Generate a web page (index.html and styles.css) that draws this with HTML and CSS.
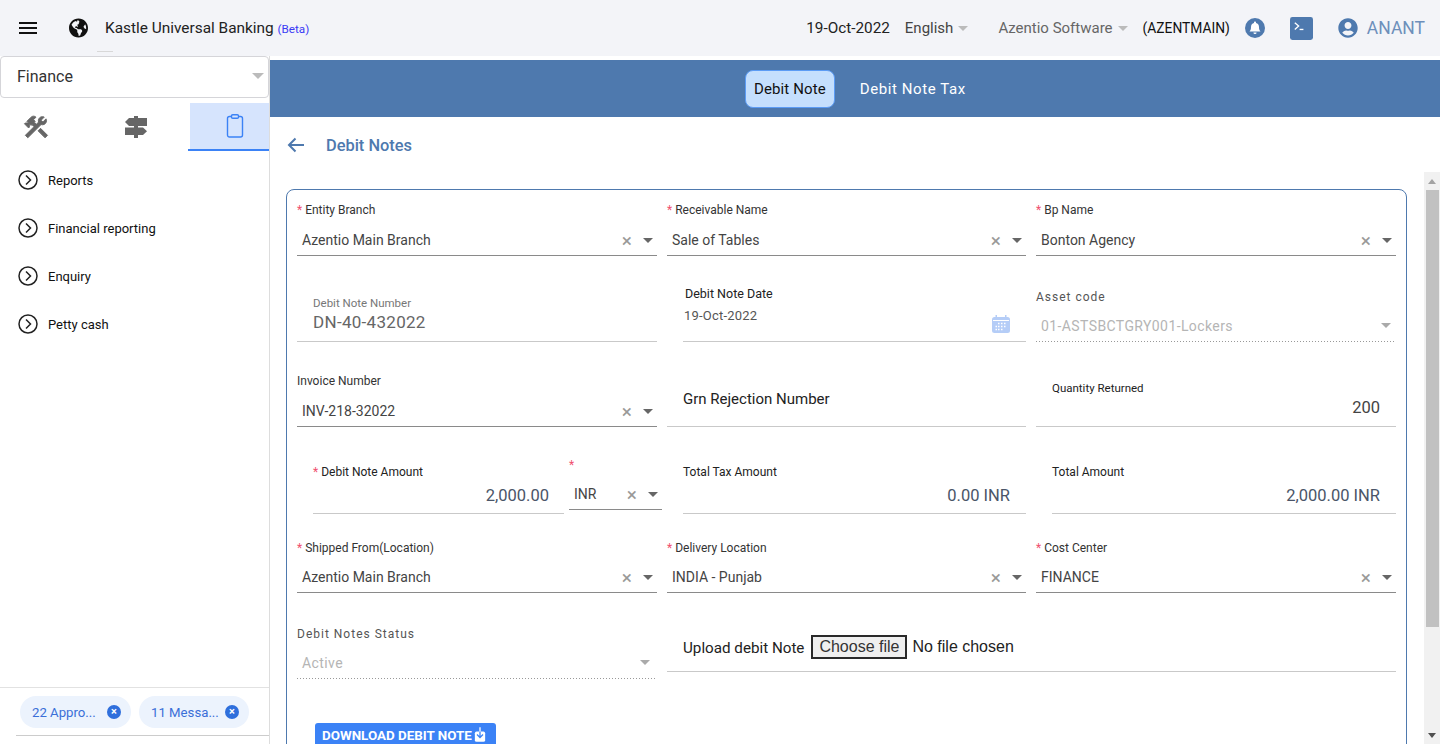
FILE: index.html
```html
<!DOCTYPE html>
<html>
<head>
  <meta charset="utf-8">
  <title>Debit Notes</title>
  <link rel="stylesheet" href="styles.css">
</head>
<body>

<header class="topbar">
  <div class="burger"><span></span><span></span><span></span></div>
  <svg class="globe" viewBox="0 0 496 512"><path d="M248 8C111.03 8 0 119.03 0 256s111.03 248 248 248 248-111.03 248-248S384.97 8 248 8zm82.29 357.6c-3.9 3.88-7.99 7.95-11.31 11.28-2.99 3-5.1 6.7-6.17 10.71-1.51 5.66-2.73 11.38-4.77 16.87l-17.39 46.85c-13.76 3-28 4.69-42.65 4.69v-27.38c1.69-12.62-7.64-36.26-22.63-51.25-6-6-9.37-14.14-9.37-22.63v-32.01c0-11.64-6.27-22.34-16.46-27.97-14.37-7.95-34.81-19.06-48.81-26.11-11.48-5.78-22.1-13.14-31.65-21.75l-.8-.72a114.792 114.792 0 0 1-18.06-20.74c-9.38-13.77-24.66-36.42-34.59-51.14 20.47-45.5 57.36-82.04 103.2-101.89l24.01 12.01C203.48 89.74 216 82.01 216 70.11v-11.3c7.99-1.29 16.12-2.11 24.39-2.42l28.3 28.3c6.25 6.25 6.25 16.38 0 22.63L264 112l-10.34 10.34c-3.12 3.12-3.12 8.19 0 11.31l4.69 4.69c3.12 3.12 3.12 8.19 0 11.31l-8 8a8.008 8.008 0 0 1-5.66 2.34h-8.99c-2.08 0-4.08.81-5.58 2.27l-9.92 9.65a8.008 8.008 0 0 0-1.58 9.31l15.59 31.19c2.66 5.32-1.21 11.58-7.15 11.58h-5.64c-1.93 0-3.79-.7-5.24-1.96l-9.28-8.06a16.017 16.017 0 0 0-15.55-3.1l-31.17 10.39a11.95 11.95 0 0 0-8.17 11.34c0 4.53 2.56 8.66 6.61 10.69l11.08 5.54c9.41 4.71 19.79 7.16 30.31 7.16s22.59 27.29 32 32h66.75c8.49 0 16.62 3.37 22.63 9.37l13.69 13.69a30.503 30.503 0 0 1 8.93 21.57 46.536 46.536 0 0 1-13.72 32.98zM417 274.25c-5.79-1.45-10.84-5-14.15-9.97l-17.98-26.97a23.97 23.97 0 0 1 0-26.62l19.59-29.38c2.32-3.47 5.5-6.29 9.24-8.15l12.98-6.49C440.2 193.59 448 223.87 448 256c0 8.67-.74 17.16-1.82 25.54L417 274.25z"/></svg>
  <div class="brand">Kastle Universal Banking <small>(Beta)</small></div>
  <div class="topright">
    <span class="date">19-Oct-2022</span>
    <span class="pick lang">English<i class="caret"></i></span>
    <span class="pick company">Azentio Software<i class="caret"></i></span>
    <span class="code">(AZENTMAIN)</span>
    <svg class="bell" viewBox="0 0 20 20"><circle cx="10" cy="10" r="10" fill="#4e79ae"/><path fill="#fff" d="M10 3.6c-.6 0-1 .4-1 1v.5C7.2 5.5 6 7 6 8.9c0 2.6-.6 3.5-1.5 4.6h11c-.9-1.1-1.5-2-1.5-4.6 0-1.9-1.2-3.4-3-3.8v-.5c0-.6-.4-1-1-1zM8.4 14.5a1.6 1.6 0 0 0 3.2 0z"/></svg>
    <svg class="term" viewBox="0 0 24 24"><rect width="24" height="24" rx="2.5" fill="#4e79ae"/><path d="M5 6l4 3.5L5 13" fill="none" stroke="#fff" stroke-width="1.4"/><path d="M10 13h4" stroke="#fff" stroke-width="1.4"/></svg>
    <svg class="usr" viewBox="0 0 496 512"><path d="M248 8C111 8 0 119 0 256s111 248 248 248 248-111 248-248S385 8 248 8zm0 96c48.6 0 88 39.4 88 88s-39.4 88-88 88-88-39.4-88-88 39.4-88 88-88zm0 344c-58.7 0-111.3-26.6-146.5-68.2 18.8-35.4 55.6-59.8 98.5-59.8 2.4 0 4.8.4 7.1 1.1 13 4.2 26.6 6.9 40.9 6.9 14.3 0 28-2.7 40.9-6.9 2.3-.7 4.7-1.1 7.1-1.1 42.9 0 79.7 24.4 98.5 59.8C359.3 421.4 306.7 448 248 448z"/></svg>
    <span class="uname">ANANT</span>
  </div>
  <span class="tick"></span>
</header>

<div class="page">
  <aside class="side">
    <div class="module">Finance<i class="caret"></i></div>
    <div class="sidetabs">
      <div class="stab">
        <svg class="tools" viewBox="0 0 24 24"><path d="M13.78 15.3L19.78 21.3L21.89 19.14L15.89 13.14L13.78 15.3M17.5 10.1C17.11 10.1 16.69 10.05 16.36 9.91L4.97 21.25L2.86 19.14L10.27 11.74L8.5 9.96L7.78 10.66L6.33 9.25V12.11L5.63 12.81L2.11 9.25L2.81 8.55H5.62L4.22 7.14L7.78 3.58C8.95 2.41 10.83 2.41 12 3.58L9.89 5.74L11.3 7.14L10.59 7.85L12.38 9.63L14.2 7.75C14.06 7.42 14 7 14 6.63C14 4.66 15.56 3.11 17.5 3.11C18.09 3.11 18.61 3.25 19.08 3.53L16.41 6.2L17.91 7.7L20.58 5.03C20.86 5.5 21 6 21 6.63C21 8.59 19.44 10.1 17.5 10.1Z"/></svg>
      </div>
      <div class="stab">
        <svg class="signs" viewBox="0 0 24 22"><path d="M5 2H23V10H5L1 6Z"/><path d="M1 11.5H19L23 15.25L19 19H1Z"/><path d="M10 0H14V22H10Z"/></svg>
      </div>
      <div class="stab active">
        <svg class="clip" viewBox="0 0 18 24"><rect x="1.5" y="2.5" width="15" height="20.5" rx="2" fill="none" stroke="#3b82f6" stroke-width="1.4"/><rect x="5.5" y="0.7" width="7" height="3.6" rx="1.2" fill="#d6e4fd" stroke="#3b82f6" stroke-width="1.4"/></svg>
      </div>
    </div>
    <ul class="menu">
      <li><svg class="chev" viewBox="0 0 20 20"><circle cx="10" cy="10" r="9" fill="none" stroke="#222" stroke-width="1.5"/><path d="M8 5.5l4.5 4.5L8 14.5" fill="none" stroke="#222" stroke-width="1.5"/></svg>Reports</li>
      <li><svg class="chev" viewBox="0 0 20 20"><circle cx="10" cy="10" r="9" fill="none" stroke="#222" stroke-width="1.5"/><path d="M8 5.5l4.5 4.5L8 14.5" fill="none" stroke="#222" stroke-width="1.5"/></svg>Financial reporting</li>
      <li><svg class="chev" viewBox="0 0 20 20"><circle cx="10" cy="10" r="9" fill="none" stroke="#222" stroke-width="1.5"/><path d="M8 5.5l4.5 4.5L8 14.5" fill="none" stroke="#222" stroke-width="1.5"/></svg>Enquiry</li>
      <li><svg class="chev" viewBox="0 0 20 20"><circle cx="10" cy="10" r="9" fill="none" stroke="#222" stroke-width="1.5"/><path d="M8 5.5l4.5 4.5L8 14.5" fill="none" stroke="#222" stroke-width="1.5"/></svg>Petty cash</li>
    </ul>
    <div class="chips">
      <span class="chip">22 Appro...<b>×</b></span>
      <span class="chip">11 Messa...<b>×</b></span>
    </div>
    <div class="sidefoot"></div>
  </aside>

  <main class="main">
    <nav class="tabs">
      <a class="tab on">Debit Note</a>
      <a class="tab">Debit Note Tax</a>
    </nav>
    <div class="titlerow">
      <svg class="back" viewBox="0 0 18 16"><path d="M17 8H2M8.5 1.5L2 8l6.5 6.5" fill="none" stroke="#4e79ae" stroke-width="2"/></svg>
      <h1>Debit Notes</h1>
    </div>
    <div class="body">
      <div class="scrollarea">
        <form class="card">

          <div class="field sel">
            <label><em>*</em> Entity Branch</label>
            <div class="val">Azentio Main Branch<s>×</s><i class="caret dark"></i></div>
          </div>
          <div class="field sel">
            <label><em>*</em> Receivable Name</label>
            <div class="val">Sale of Tables<s>×</s><i class="caret dark"></i></div>
          </div>
          <div class="field sel">
            <label><em>*</em> Bp Name</label>
            <div class="val">Bonton Agency<s>×</s><i class="caret dark"></i></div>
          </div>

          <div class="field text indent">
            <label class="gray">Debit Note Number</label>
            <div class="big">DN-40-432022</div>
          </div>
          <div class="field text datef">
            <label class="dark">Debit Note Date</label>
            <div class="dateval">19-Oct-2022
              <svg class="cal" viewBox="0 0 20 20"><rect x="1" y="3" width="18" height="16" rx="2.5" fill="#b5cdf7"/><rect x="4.5" y="1" width="1.5" height="4" fill="#b5cdf7"/><rect x="14" y="1" width="1.5" height="4" fill="#b5cdf7"/><path d="M2 6.5h16" stroke="#fff"/><path d="M7 9.5h1.5M10 9.5h1.5M13 9.5h1.5M4.5 12.5h1.5M7 12.5h1.5M10 12.5h1.5M13 12.5h1.5M4.5 15.5h1.5M7 15.5h1.5M10 15.5h1.5" stroke="#fff" stroke-width="1.5"/></svg>
            </div>
          </div>
          <div class="field off">
            <label class="spaced">Asset code</label>
            <div class="val">01-ASTSBCTGRY001-Lockers<i class="caret dark"></i></div>
          </div>

          <div class="field sel">
            <label>Invoice Number</label>
            <div class="val">INV-218-32022<s>×</s><i class="caret dark"></i></div>
          </div>
          <div class="field text plain">
            <div class="grn">Grn Rejection Number</div>
          </div>
          <div class="field text qty">
            <label class="dark">Quantity Returned</label>
            <div class="num">200</div>
          </div>

          <div class="amtgroup">
            <div class="field text amount">
              <label class="dark"><em>*</em> Debit Note Amount</label>
              <div class="num navy">2,000.00</div>
            </div>
            <div class="field sel cur">
              <label><em>*</em></label>
              <div class="val">INR<s>×</s><i class="caret dark"></i></div>
            </div>
          </div>
          <div class="field text tax">
            <label class="dark">Total Tax Amount</label>
            <div class="num navy">0.00 INR</div>
          </div>
          <div class="field text total">
            <label class="dark">Total Amount</label>
            <div class="num navy">2,000.00 INR</div>
          </div>

          <div class="field sel low">
            <label><em>*</em> Shipped From(Location)</label>
            <div class="val">Azentio Main Branch<s>×</s><i class="caret dark"></i></div>
          </div>
          <div class="field sel low">
            <label><em>*</em> Delivery Location</label>
            <div class="val">INDIA - Punjab<s>×</s><i class="caret dark"></i></div>
          </div>
          <div class="field sel low">
            <label><em>*</em> Cost Center</label>
            <div class="val">FINANCE<s>×</s><i class="caret dark"></i></div>
          </div>

          <div class="field off status">
            <label class="spaced">Debit Notes Status</label>
            <div class="val">Active<i class="caret dark"></i></div>
          </div>
          <div class="field text upload">
            <span class="uplabel">Upload debit Note</span>
            <span class="filebtn">Choose file</span>
            <span class="filename">No file chosen</span>
          </div>

          <div class="dlrow">
            <button type="button" class="dl">DOWNLOAD DEBIT NOTE<svg viewBox="0 0 14 18"><rect x="1" y="5" width="12" height="12" rx="2" fill="#fff"/><path d="M7 5v7M3.5 8.5L7 12l3.5-3.5" fill="none" stroke="#3b82f6" stroke-width="1.5"/><path d="M7 0v5" stroke="#fff" stroke-width="1.5"/></svg></button>
          </div>
        </form>
      </div>
      <div class="scrollbar">
        <span class="arrow up"></span>
        <span class="thumb"></span>
        <span class="arrow down"></span>
      </div>
    </div>
  </main>
</div>

</body>
</html>
```

FILE: styles.css
```css
* {
  box-sizing: border-box;
}

html, body {
  margin: 0;
  height: 744px;
  overflow: hidden;
}

body {
  font-family: Roboto, sans-serif;
  font-size: 14px;
  color: #333;
  background: #fff;
}

.topbar {
  position: relative;
  height: 56px;
  background: #f3f4f8;
  display: flex;
  align-items: center;
  padding-left: 19px;
}

.burger {
  width: 18px;
  display: flex;
  flex-direction: column;
  gap: 3px;
}
.burger span {
  height: 2px;
  background: #111;
}

.globe {
  width: 19px;
  height: 20px;
  margin-left: 32px;
  fill: #111;
}

.brand {
  margin-left: 17px;
  font-size: 15.4px;
  color: #222;
}
.brand small {
  font-size: 11.7px;
  color: #3a3af5;
}

.topright {
  margin-left: auto;
  display: flex;
  align-items: center;
  padding-right: 15px;
}
.date {
  color: #222;
  font-size: 15.3px;
}
.pick {
  display: flex;
  align-items: center;
  font-size: 15px;
}
.lang {
  margin-left: 15px;
  color: #444;
}
.company {
  margin-left: 30px;
  color: #666;
}
.code {
  margin-left: 15px;
  font-size: 13.8px;
  color: #111;
}
.bell {
  width: 20px;
  height: 20px;
  margin-left: 15px;
}
.term {
  width: 23px;
  height: 23px;
  margin-left: 25px;
}
.usr {
  width: 20px;
  height: 20px;
  margin-left: 25px;
  fill: #4e79ae;
}
.uname {
  margin-left: 9px;
  font-size: 17.5px;
  color: #6d8fbb;
}

.tick {
  position: absolute;
  left: 97px;
  top: 51px;
  width: 16px;
  height: 1px;
  background: #d8d8d8;
}

.caret {
  display: inline-block;
  width: 0;
  height: 0;
  margin-left: 5px;
  border-left: 5px solid transparent;
  border-right: 5px solid transparent;
  border-top: 5px solid #bbb;
}
.caret.dark {
  border-top-color: #666;
  margin-left: 11px;
}

.page {
  display: flex;
  height: 688px;
}

.side {
  width: 270px;
  flex: none;
  border-right: 1px solid #ddd;
  display: flex;
  flex-direction: column;
}

.module {
  height: 42px;
  border: 1px solid #d5d5d9;
  border-radius: 4px;
  display: flex;
  align-items: center;
  justify-content: space-between;
  padding: 0 4px 2px 16px;
  font-size: 16px;
  color: #333;
  background: #fff;
}
.module .caret {
  border-left-width: 6px;
  border-right-width: 6px;
  border-top-width: 6px;
}

.sidetabs {
  display: flex;
  margin-top: 5px;
  height: 48px;
}
.stab {
  display: flex;
  align-items: center;
  justify-content: center;
  padding-bottom: 1px;
}
.stab:nth-child(1) {
  width: 71px;
}
.stab:nth-child(2) {
  width: 117px;
  padding-left: 12px;
}
.stab.active {
  flex: 1;
  padding-left: 12px;
  background: linear-gradient(#d6e4fd, #d6e4fd) 2px 0 no-repeat;
  border-bottom: 2px solid #3b82f6;
}
.tools {
  width: 28px;
  height: 28px;
  fill: #666;
  stroke: #666;
  stroke-width: .8;
}
.signs {
  width: 24px;
  height: 22px;
  fill: #666;
}
.clip {
  width: 18px;
  height: 24px;
}

.menu {
  list-style: none;
  margin: 5px 0 0;
  padding: 0;
}
.menu li {
  height: 48px;
  display: flex;
  align-items: center;
  padding-left: 18px;
  font-size: 13px;
  color: #111;
}
.chev {
  width: 20px;
  height: 20px;
  margin-right: 10px;
}

.chips {
  margin-top: auto;
  height: 48px;
  border-top: 1px solid #e2e2e2;
  display: flex;
  gap: 8px;
  padding: 8px 0 0 20px;
}
.chip {
  height: 32px;
  width: 111px;
  border-radius: 16px;
  background: #ecf3fd;
  color: #3b6fd8;
  font-size: 13.2px;
  display: flex;
  align-items: center;
  justify-content: space-between;
  padding: 0 10px 0 12px;
}
.chip + .chip {
  width: 110px;
}
.chip b {
  width: 14px;
  height: 14px;
  border-radius: 50%;
  background: #2f6fdc;
  color: #fff;
  font-size: 11px;
  line-height: 14px;
  text-align: center;
}
.sidefoot {
  margin: 0 0 0 16px;
  border-top: 1px solid #ccc;
  height: 9px;
}

.main {
  flex: 1;
  min-width: 0;
  display: flex;
  flex-direction: column;
  padding-top: 4px;
}

.tabs {
  height: 57px;
  background: #4e79ae;
  display: flex;
  align-items: center;
  justify-content: center;
  gap: 17px;
  padding-left: 9px;
}
.tab {
  height: 38px;
  display: flex;
  align-items: center;
  padding: 0 8px;
  color: #fff;
  font-size: 15px;
  letter-spacing: .6px;
}
.tab.on {
  background: #c5dffd;
  color: #111;
  border: 1px solid #5c9cf5;
  border-radius: 8px;
  letter-spacing: .1px;
}

.titlerow {
  height: 55px;
  display: flex;
  align-items: center;
  padding: 1px 0 0 17px;
}
.back {
  width: 18px;
  height: 16px;
}
.titlerow h1 {
  margin: 0 0 0 21px;
  font-size: 16.4px;
  font-weight: 500;
  color: #4e79ae;
}

.body {
  flex: 1;
  min-height: 0;
  display: flex;
}
.scrollarea {
  flex: 1;
  min-width: 0;
  overflow: hidden;
  padding: 17px 17px 0 16px;
}

.scrollbar {
  width: 16px;
  flex: none;
  background: #f1f1f1;
  display: flex;
  flex-direction: column;
  align-items: center;
}
.thumb {
  width: 13px;
  height: 437px;
  margin-top: 6px;
  background: #c1c1c1;
}
.arrow {
  width: 0;
  height: 0;
  border-left: 4px solid transparent;
  border-right: 4px solid transparent;
}
.arrow.up {
  margin-top: 7px;
  border-bottom: 5px solid #a3a3a3;
}
.arrow.down {
  margin-top: auto;
  margin-bottom: 6px;
  border-top: 5px solid #505050;
}

.card {
  border: 1px solid #4e79ae;
  border-radius: 8px;
  padding: 10px 10px 30px 10px;
  display: grid;
  grid-template-columns: 360px 359px 360px;
  grid-template-rows: 56px 86px 85px 87px 79px 79px auto;
  column-gap: 10px;
}

.field {
  align-self: end;
  border-bottom: 1px solid #c9c9c9;
  position: relative;
}
.field label {
  display: block;
  font-size: 12px;
  color: #333;
  line-height: 14px;
}
.field em {
  color: #f0506e;
  font-style: normal;
}
.field label.gray {
  color: #777;
  font-size: 11.5px;
}
.field label.dark {
  color: #222;
}
.field label.spaced {
  color: #555;
  letter-spacing: 1px;
  font-size: 12px;
}

.val {
  display: flex;
  align-items: center;
  height: 30px;
  padding: 0 5px;
  font-size: 14px;
  color: #444;
}
.val s {
  margin-left: auto;
  text-decoration: none;
  color: #999;
  font-size: 19px;
  line-height: 1;
}
.sel {
  border-bottom-color: #8a8a8a;
}
.sel label {
  margin-bottom: 8px;
}
.sel.low label {
  margin-bottom: 7px;
}
.sel .val {
  padding-right: 4px;
}

.indent {
  padding: 0 0 8px 16px;
}
.big {
  font-size: 17px;
  color: #666;
  line-height: 22px;
  margin-top: 1px;
  letter-spacing: .3px;
}

.datef {
  margin-left: 16px;
  height: 55px;
  padding-left: 2px;
}
.datef label.dark {
  font-size: 12.5px;
}
.dateval {
  margin-top: 7px;
  margin-left: -1px;
  font-size: 13px;
  color: #555;
  letter-spacing: .2px;
  line-height: 15px;
  display: flex;
  justify-content: space-between;
}
.cal {
  width: 20px;
  height: 20px;
  margin: 6px 15px 0 0;
}

/* dots in the reference sit 3px apart, border dotted is too dense */
.off {
  border-bottom: none;
  padding-bottom: 1px;
  background: linear-gradient(to right, #999 1px, transparent 1px) left bottom / 3px 1px repeat-x;
}
.off label {
  margin-bottom: 13px;
}
.off .val {
  color: #b5b5b5;
  height: 24px;
  padding-bottom: 7px;
  letter-spacing: .4px;
  justify-content: space-between;
}
.off .caret {
  border-top-color: #aaa;
}

.plain {
  height: 56px;
  display: flex;
  align-items: center;
  padding-left: 16px;
}
.grn {
  font-size: 15px;
  color: #222;
  margin-top: 1px;
}

.qty {
  padding: 0 16px 0 16px;
}
.qty label.dark {
  font-size: 11.5px;
  margin-bottom: 1px;
}
.num {
  text-align: right;
  font-size: 16.5px;
  color: #444;
  line-height: 24px;
  padding-bottom: 6px;
}
.num.navy {
  color: #4a5568;
  padding-bottom: 5px;
}

.amtgroup {
  display: flex;
  align-items: flex-end;
  padding-left: 16px;
}
.amtgroup .amount {
  width: 251px;
}
.amount .num.navy {
  padding-right: 15px;
}
.amount label, .tax label, .total label {
  margin-bottom: 5px;
}
.cur {
  width: 93px;
  margin: 0 -5px 4px 5px;
}
.sel.cur label {
  margin-bottom: 7px;
}

.tax {
  margin-left: 16px;
}
.tax .num {
  padding-right: 16px;
}
.total {
  margin-left: 16px;
}
.total .num {
  padding-right: 16px;
}

.status {
  margin: 0 2px -7px 0;
}

.upload {
  grid-column: 2 / 4;
  display: flex;
  align-items: center;
  height: 50px;
  padding-left: 16px;
}
.uplabel {
  font-size: 15.2px;
  color: #222;
  margin: 3px 7px 0 0;
}
.filebtn {
  width: 96px;
  height: 24px;
  border: 2px solid #2a2a2a;
  background: #efefef;
  font-family: "Liberation Sans", sans-serif;
  font-size: 16px;
  line-height: 19px;
  text-align: center;
  color: #333;
}
.filename {
  margin-left: 5px;
  font-family: "Liberation Sans", sans-serif;
  font-size: 16px;
  color: #222;
}

.dlrow {
  grid-column: 1 / -1;
  padding: 51px 0 0 18px;
}
.dl {
  display: flex;
  align-items: center;
  height: 26px;
  width: 181px;
  border: none;
  border-radius: 3px;
  background: #3b82f6;
  color: #fff;
  font-family: Roboto, sans-serif;
  font-weight: 700;
  font-size: 13.4px;
  padding: 0 0 2px 7px;
  white-space: nowrap;
}
.dl svg {
  width: 12px;
  height: 16px;
  margin-left: 2px;
}
```
